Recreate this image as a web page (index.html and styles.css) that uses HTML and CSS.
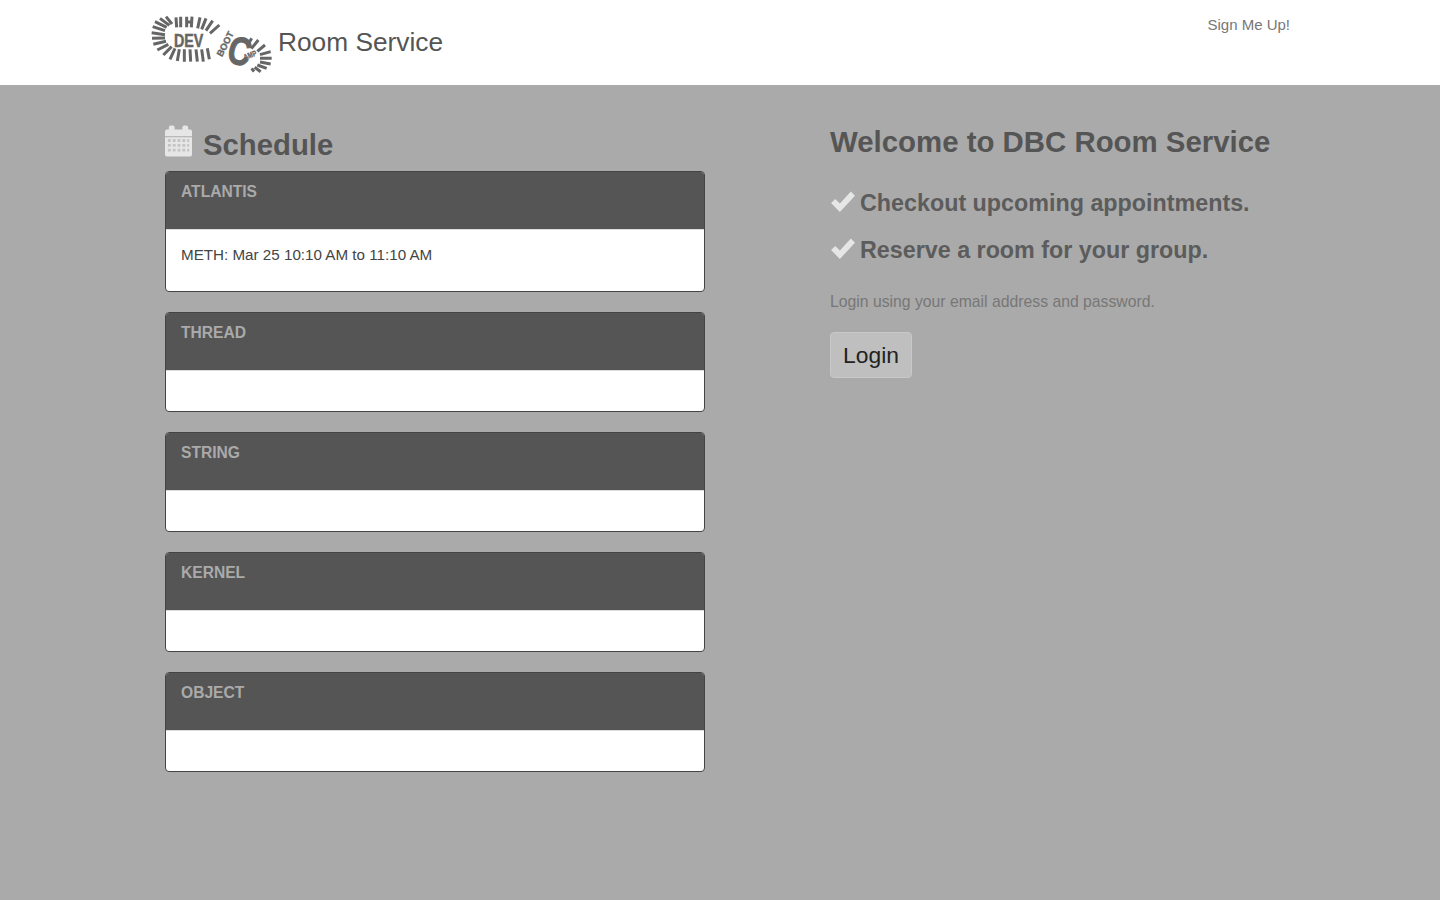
FILE: index.html
```html
<!DOCTYPE html>
<html lang="en">
<head>
  <meta charset="UTF-8" />
  <title>DBC Room Service</title>
  <link rel="stylesheet" href="styles.css">
</head>
<body>
  <header class="site-header">
    <div class="header-inner">
      <a class="brand" href="#">
        <svg class="logo" viewBox="0 0 375 195" aria-hidden="true">
          <g class="ticks">
            <path d="M8 50 L45 62 M15 35 L50 52 M30 25 L58 46 M48 20 L66 42"/>
            <path d="M78 22 L80 52 M92 20 L92 52 M110 20 L110 52 M126 20 L124 52 M108 36 L126 36"/>
            <path d="M150 22 L143 55 M168 25 L155 58 M188 32 L168 62 M208 45 L180 70"/>
            <path d="M5 68 L45 74 M6 85 L45 84 M10 103 L48 94 M22 120 L55 103 M40 135 L65 110 M60 148 L75 115 M82 153 L88 118 M103 155 L103 118 M122 155 L120 118 M142 155 L138 118 M160 155 L155 118 M178 148 L172 115"/>
            <path d="M305 85 L292 108 M325 90 L304 116 M345 105 L322 124 M362 125 L330 134 M365 145 L330 145 M362 162 L330 156 M350 175 L322 165 M332 185 L314 172 M312 185 L305 175"/>
          </g>
          <text class="logo-dev" x="72" y="110" textLength="88" lengthAdjust="spacingAndGlyphs">DEV</text>
          <text class="logo-boot" transform="translate(216 142) rotate(-63)" textLength="80" lengthAdjust="spacingAndGlyphs">BOOT</text>
          <text class="logo-c" transform="translate(226 154) rotate(15) scale(.8 1)">C</text>
          <text class="logo-amp" transform="translate(284 150) rotate(-20)" textLength="40" lengthAdjust="spacingAndGlyphs">AMP</text>
        </svg>
        <span class="brand-name">Room Service</span>
      </a>
      <a class="signup" href="#">Sign Me Up!</a>
    </div>
  </header>

  <main class="content">
    <section class="schedule">
      <h2 class="schedule-title">
        <svg class="calendar-icon" viewBox="0 0 28 32" aria-hidden="true">
          <rect class="cal-grid" x="2" y="13" width="24" height="15"/>
          <path d="M0 6 a2 2 0 0 1 2-2 h2 v-2 a2 2 0 0 1 2-2 h2 a2 2 0 0 1 2 2 v2 h8 v-2 a2 2 0 0 1 2-2 h2 a2 2 0 0 1 2 2 v2 h2 a2 2 0 0 1 2 2 v5 H0z"/>
          <path fill-rule="evenodd" d="M0 12 H28 V30 a2 2 0 0 1-2 2 H2 a2 2 0 0 1-2-2z M3 14 v3 h3 v-3z M8 14 v3 h3 v-3z M13 14 v3 h3 v-3z M18 14 v3 h3 v-3z M23 14 v3 h2 v-3z M3 19 v3 h3 v-3z M8 19 v3 h3 v-3z M13 19 v3 h3 v-3z M18 19 v3 h3 v-3z M23 19 v3 h2 v-3z M3 24 v3 h3 v-3z M8 24 v3 h3 v-3z M13 24 v3 h3 v-3z M18 24 v3 h3 v-3z M23 24 v3 h2 v-3z"/>
        </svg>
        Schedule
      </h2>

      <div class="room">
        <h3 class="room-name">ATLANTIS</h3>
        <div class="room-body has-items"><p>METH: Mar 25 10:10 AM to 11:10 AM</p></div>
      </div>
      <div class="room">
        <h3 class="room-name">THREAD</h3>
        <div class="room-body"></div>
      </div>
      <div class="room">
        <h3 class="room-name">STRING</h3>
        <div class="room-body"></div>
      </div>
      <div class="room">
        <h3 class="room-name">KERNEL</h3>
        <div class="room-body"></div>
      </div>
      <div class="room">
        <h3 class="room-name">OBJECT</h3>
        <div class="room-body"></div>
      </div>
    </section>

    <section class="welcome">
      <h2 class="welcome-title">Welcome to DBC Room Service</h2>
      <p class="feature">
        <svg class="check-icon" viewBox="0 0 24 22" aria-hidden="true"><path d="M1 12.5 L5 8.5 L9.5 13 L20 1.5 L24 5.5 L9.5 21z"/></svg>
        Checkout upcoming appointments.
      </p>
      <p class="feature">
        <svg class="check-icon" viewBox="0 0 24 22" aria-hidden="true"><path d="M1 12.5 L5 8.5 L9.5 13 L20 1.5 L24 5.5 L9.5 21z"/></svg>
        Reserve a room for your group.
      </p>
      <p class="login-note">Login using your email address and password.</p>
      <button class="login-btn">Login</button>
    </section>
  </main>
</body>
</html>
```

FILE: styles.css
```css
/* General Styles */
body {
  font-family: "Liberation Sans", Arial, sans-serif;
  margin: 0;
  min-height: 900px;
  background-color: #aaaaaa;
  color: #555;
}

a {
  text-decoration: none;
}

/* Header */
.site-header {
  background-color: #fff;
  height: 85px;
}

.header-inner {
  width: 1140px;
  margin: 0 auto;
  display: flex;
  justify-content: space-between;
  align-items: flex-start;
}

.brand {
  display: flex;
  align-items: flex-start;
  color: #555;
  padding-top: 10px;
}

.logo {
  display: block;
  width: 125px;
  height: 65px;
  flex: none;
  overflow: visible;
}

.ticks {
  fill: none;
  stroke: #666;
  stroke-width: 9;
}

.logo text {
  fill: #666;
  stroke: #666;
  font-weight: bold;
}

.logo-dev {
  font-size: 56px;
  stroke-width: 1.5;
}

.logo-boot {
  font-size: 28px;
  stroke-width: 1;
}

.logo-c {
  font-size: 118px;
  stroke-width: 3;
}

.logo-amp {
  font-size: 24px;
  stroke-width: 1;
}

.brand-name {
  font-size: 26.3px;
  line-height: 32px;
  margin: 16px 0 0 3px;
}

.signup {
  color: #777;
  font-size: 15px;
  line-height: 20px;
  margin-top: 15px;
}

/* Main Content */
.content {
  width: 1110px;
  margin: 0 auto;
  display: flex;
}

.schedule {
  flex: none;
  width: 540px;
  margin-right: 125px;
}

.schedule-title {
  display: flex;
  align-items: flex-start;
  margin: 0;
  height: 44px;
  padding-top: 42px;
  font-size: 29.3px;
  line-height: 36px;
  color: #555;
}

.calendar-icon {
  width: 27px;
  height: 32px;
  margin: -2px 11px 0 0;
  fill: #e6e6e6;
}

.calendar-icon .cal-grid {
  fill: #c4c4c4;
}

/* Rooms */
.room {
  border: 1px solid #444;
  border-radius: 4px;
  background-color: #fff;
  margin-bottom: 20px;
  overflow: hidden;
}

.room-name {
  margin: 0;
  height: 57px;
  padding: 10px 15px 0;
  box-sizing: border-box;
  background-color: #555;
  color: #aaa;
  font-size: 15.6px;
  line-height: 20px;
}

.room-body {
  height: 40px;
  border-top: 1px solid #ddd;
}

.room-body.has-items {
  height: 61px;
}

.room-body p {
  margin: 0;
  padding: 15px 15px 0;
  font-size: 15.2px;
  line-height: 20px;
  color: #444;
}

/* Welcome */
.welcome {
  flex: none;
  width: 445px;
  padding-top: 39px;
}

.welcome-title {
  margin: 0 0 28px;
  font-size: 29.4px;
  line-height: 36px;
  color: #555;
  white-space: nowrap;
}

.feature {
  display: flex;
  align-items: center;
  margin: 0 0 17.5px;
  height: 30px;
  font-size: 23.3px;
  font-weight: bold;
  color: #5c5c5c;
}

.check-icon {
  width: 25px;
  height: 23px;
  margin: -4px 5px 0 0;
  fill: #e6e6e6;
  flex: none;
}

.login-note {
  margin: 26.5px 0 20px;
  font-size: 15.75px;
  line-height: 20px;
  color: #777;
}

.login-btn {
  display: block;
  width: 82px;
  height: 46px;
  padding: 0;
  border: 1px solid #c8c8c8;
  border-radius: 4px;
  background-color: #bfbfbf;
  color: #222;
  font-family: inherit;
  font-size: 22.8px;
}
```
